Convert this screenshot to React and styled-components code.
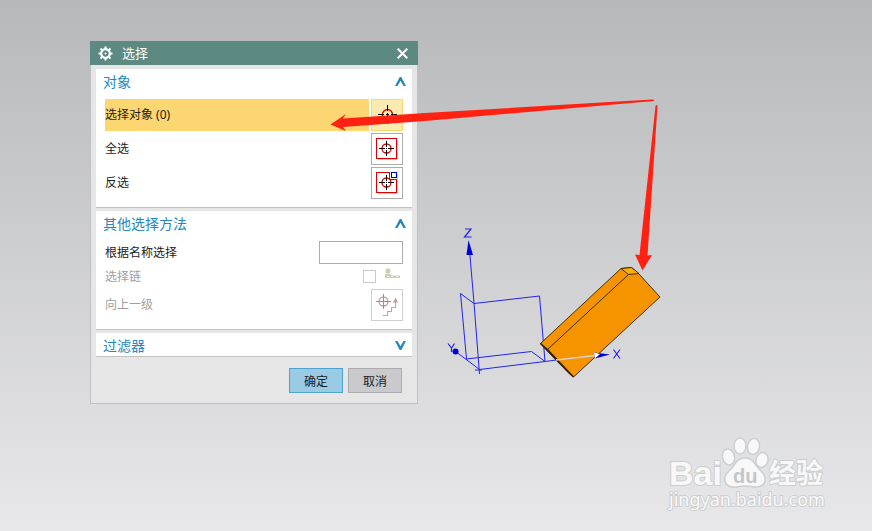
import React from "react";
import styled, { createGlobalStyle, css } from "styled-components";

const GlobalStyle = createGlobalStyle`
  *, *::before, *::after { box-sizing: border-box; }
  body {
    margin: 0;
    font-family: "Noto Sans", "Noto Sans CJK SC", sans-serif;
    font-size: 12px;
    color: #1c1c1c;
  }
`;

const Viewport = styled.main`
  position: relative;
  min-height: 100vh;
  padding: 41px 90px;
  overflow: hidden;
  background: linear-gradient(#b7b8b9, #e8e8ea);
`;

const Scene = styled.svg`
  position: absolute;
  top: 0;
  left: 0;
  pointer-events: none;
`;

const Watermark = styled.svg`
  position: absolute;
  right: 42px;
  bottom: 16px;
  pointer-events: none;
`;

const Dialog = styled.section`
  width: 100%;
  max-width: 328px;
`;

const TitleBar = styled.header`
  display: flex;
  align-items: center;
  gap: 9px;
  height: 24px;
  padding: 0 10px 0 8px;
  background: #5c8a82;
  color: #fff;
`;

const Title = styled.h1`
  flex: 1;
  margin: 0;
  font-size: 13px;
  font-weight: 400;
  line-height: 24px;
`;

const PlainButton = styled.button`
  display: flex;
  padding: 0;
  border: 0;
  background: none;
  color: inherit;
`;

const Body = styled.form`
  display: flex;
  flex-direction: column;
  gap: 3px;
  padding: 4px 5px 10px;
  border: 1px solid #c0c0c2;
  border-top: 0;
  background: #e6e6e6;
`;

const Group = styled.section`
  padding-bottom: ${(p) => (p.$open ? 8 : 0)}px;
  border-bottom: 1px solid #c3c3c3;
  background: #fff;
`;

const GroupHeader = styled.h2`
  display: flex;
  align-items: center;
  justify-content: space-between;
  height: 23px;
  margin: 0;
  padding: 2px 6px 0 7px;
  color: #2587bd;
  font-size: 14px;
  font-weight: 400;
  line-height: 26px;
`;

const Rows = styled.div`
  display: flex;
  flex-direction: column;
  gap: ${(p) => p.$gap}px;
  padding: 7px 9px 0;
`;

const Row = styled.div`
  display: flex;
  align-items: center;
  gap: 2px;
  color: ${(p) => (p.$disabled ? "#a0a0a0" : "inherit")};
`;

const RowLabel = styled.label`
  flex: 1;
  line-height: ${(p) => p.$height || 32}px;
  ${(p) => p.$selected && css`background: #fcd670;`}
`;

const ToolButton = styled.button`
  display: grid;
  place-items: center;
  width: 32px;
  height: 32px;
  padding: 0;
  border: 1px solid #acacac;
  background: #fff;
  ${(p) => p.$selected && css`border-color: #fcd670; background: #faebb0;`}
  &:disabled { border-color: #cfcfcf; }
`;

const NameInput = styled.input`
  width: 84px;
  height: 23px;
  padding: 0 4px;
  border: 1px solid #acacac;
  background: #fff;
  font: inherit;
`;

const CheckBox = styled.input`
  appearance: none;
  width: 13px;
  height: 13px;
  margin: 0 5px 0 0;
  border: 1px solid #cacaca;
  background: #fff;
`;

const Footer = styled.footer`
  display: flex;
  justify-content: flex-end;
  gap: 5px;
  padding: 8px 10px 0;
`;

const ActionButton = styled.button`
  width: 54px;
  height: 25px;
  padding: 0;
  border: 1px solid ${(p) => (p.$primary ? "#4ca3d0" : "#acacae")};
  background: ${(p) => (p.$primary ? "#9acbe5" : "#c9c9ce")};
  color: inherit;
  font: inherit;
`;

function GearIcon() {
  return (
    <svg width="15" height="15" viewBox="-7.5 -7.5 15 15" aria-hidden="true">
      {[0, 45, 90, 135, 180, 225, 270, 315].map((a) => (
        <rect key={a} x="-1" y="-7" width="2" height="3" fill="#fff" transform={`rotate(${a})`} />
      ))}
      <circle r="4.3" fill="none" stroke="#fff" strokeWidth="2.2" />
      <circle r="1" fill="#fff" />
    </svg>
  );
}

function CloseIcon() {
  return (
    <svg width="11" height="11" viewBox="0 0 11 11" aria-hidden="true">
      <path d="M.7.7 10.3 10.3M10.3.7.7 10.3" stroke="#fff" strokeWidth="2" />
    </svg>
  );
}

function Chevron({ down }) {
  return (
    <svg width="11" height="9" viewBox="0 0 11 9" aria-hidden="true">
      <path
        d={down ? "M0 0H2.5L5.5 5.2 8.5 0H11L6.3 9H4.7Z" : "M0 9H2.5L5.5 3.8 8.5 9H11L6.3 0H4.7Z"}
        fill="#2587bd"
      />
    </svg>
  );
}

function PickIcon({ kind }) {
  if (kind === "single") {
    return (
      <svg width="20" height="20" viewBox="0 0 20 20" shapeRendering="crispEdges" aria-hidden="true">
        <circle cx="10.5" cy="9.5" r="5" fill="none" stroke="#d00" strokeWidth="1.3" shapeRendering="auto" />
        <path d="M1 9.5H7M9 9.5H12M14 9.5H20M10.5 0V6M10.5 8V11M10.5 13V19" stroke="#000" />
      </svg>
    );
  }
  const inverted = kind === "invert";
  return (
    <svg width="22" height="22" viewBox="0 0 22 22" shapeRendering="crispEdges" aria-hidden="true">
      <path d="M2 21.5H21.5V2" fill="none" stroke="#c8c8c8" />
      <path
        d={inverted ? "M13.5 .5H.5V20.5H20.5V7.5H13.5Z" : "M.5 .5H20.5V20.5H.5Z"}
        fill="#fff"
        stroke="#d80000"
      />
      <circle cx="10.5" cy="10.5" r="4.5" fill="none" stroke="#d40000" strokeWidth="1.3" shapeRendering="auto" />
      <path d="M3 10.5H9M12 10.5H18M10.5 3V9M10.5 12V18M10 10.5H11" stroke="#000" />
      {inverted && <rect x="15.5" y=".5" width="5" height="5" fill="#fff" stroke="#0000c0" />}
    </svg>
  );
}

function ChainIcon() {
  return (
    <svg width="20" height="17" viewBox="0 0 20 17" aria-hidden="true">
      <path d="M5 0V6M2 3H8M3 1 7 5M7 1 3 5" stroke="#c9ccb0" strokeWidth="1.2" />
      <path d="M2 6H7L9 7.500H17V10H2Z" fill="#cdd0b6" />
      <path d="M4 8.500H6M8 8.500H10M13 8.500H15" stroke="#f5f5ec" />
    </svg>
  );
}

function LevelUpIcon() {
  return (
    <svg width="24" height="24" viewBox="0 0 24 24" aria-hidden="true">
      <g fill="none" stroke="#c9a3a3">
        <circle cx="8.5" cy="8.5" r="4.5" strokeWidth="1.4" />
        <path d="M8 22.5H12.5V18.5H16.5V14.5H20.5V8" shapeRendering="crispEdges" />
      </g>
      <path d="M1 8.5H16M8.5 1V16" stroke="#929292" shapeRendering="crispEdges" />
      <path d="M20.5 4.5 23 9.5H18Z" fill="#c39b9b" />
    </svg>
  );
}

function Drawing() {
  return (
    <Scene width="872" height="531" viewBox="0 0 872 531" aria-hidden="true">
      <g fill="none" stroke="#2222f0">
        <path d="M469.5 250 474 303 479.5 374M475 370H482" />
        <path d="M474 303.5 539.5 296 545 361.5 479.5 369.5 455 351" />
        <path d="M474 303.5 460.5 293.5 466.5 359 531.5 351.5 545 361.5" />
      </g>
      <path d="M468.5 240 473 255H466.5Z" fill="#0000d8" />
      <circle cx="455.5" cy="351.5" r="3" fill="#0000d8" />
      <path d="M540.5 343.5 621 268.5 631.5 267.5 638.5 273.5 660 297 573.5 377Z" fill="#f69400" stroke="#44300e" />
      <path d="M621 268.5 631.5 267.5 639 273.5 628.5 274.5Z" fill="#ffae00" stroke="#3c2c0c" />
      <path d="M547.5 349.5 628.5 274.5" stroke="#3c2c0c" />
      <path d="M540.5 343.5 547.5 349.5 573.5 377 569 373Z" fill="#5d3b0b" stroke="#332207" strokeWidth="1.4" />
      <path d="M545 361.5 556 360" stroke="#2222f0" />
      <path d="M556 360 596 355.5" stroke="#dcd0cb" strokeWidth="1.3" />
      <path d="M594 352.5 610 354.5 595 358.5Z" fill="#0000d8" />
      <path d="M594 352.5 600 354 595 358.5Z" fill="#fff" />
      <g fill="none" stroke="#2222f0" strokeWidth="1.2">
        <path d="M465 229H471L464.5 237H471.5" />
        <path d="M448 343.5 451.5 348 454.5 343.5M451.5 348V352" />
        <path d="M613.5 349.5 620 358.5M620 349.5 613.5 358.5" />
      </g>
      <g fill="#ff2111">
        <path d="M330.5 124.5 346 114 343 118.5 425 113 652 99.5Q655 99.5 654 101L425 121 343 127 346 131Z" />
        <path d="M655.5 106Q656.5 104 657.5 106L647.5 255.5 652 255 642.5 270.5 635 254.5 639.5 255Z" />
      </g>
    </Scene>
  );
}

const MarkText = styled.text`
  font-family: ${(p) => (p.$latin ? `"${p.$latin}", ` : "")}"Noto Sans CJK SC", sans-serif;
  font-weight: ${(p) => p.$weight};
  font-size: ${(p) => p.$size}px;
  paint-order: stroke;
`;

function BaiduMark() {
  return (
    <Watermark width="164" height="84" viewBox="666 431 164 84" role="img" aria-label="Baidu">
      <g fill="#f8f8f8" stroke="#ccced0" strokeWidth="2" strokeLinejoin="round">
        <MarkText $latin="Liberation Sans" $weight={700} $size={34} x="669" y="485">Bai</MarkText>
        <g strokeWidth="1.5">
          <ellipse cx="728.5" cy="457" rx="6" ry="8" transform="rotate(-15 728.5 457)" />
          <ellipse cx="740" cy="446" rx="6" ry="8" />
          <ellipse cx="753.5" cy="446.5" rx="6" ry="8" transform="rotate(10 753.5 446.5)" />
          <ellipse cx="762" cy="460" rx="6" ry="7.5" transform="rotate(15 762 460)" />
          <path d="M745 458C754 458 755 466 761 471 769 479 765 488 754 487Q745 485 736 487C725 488 721 479 729 471 735 466 736 458 745 458Z" />
        </g>
        <MarkText $weight={700} $size={27} x="769" y="483">经验</MarkText>
        <MarkText $latin="Noto Sans" $weight={400} $size={18} x="669" y="506">jingyan.baidu.com</MarkText>
      </g>
      <MarkText $latin="Liberation Sans" $weight={700} $size={20} x="733" y="483" fill="#c4c6c8">du</MarkText>
    </Watermark>
  );
}

function PickRow({ id, label, kind, selected }) {
  return (
    <Row>
      <RowLabel htmlFor={id} $selected={selected}>{label}</RowLabel>
      <ToolButton id={id} type="button" $selected={selected}>
        <PickIcon kind={kind} />
      </ToolButton>
    </Row>
  );
}

export default function App() {
  return (
    <>
      <GlobalStyle />
      <Viewport>
        <Dialog role="dialog" aria-labelledby="dialog-title">
          <TitleBar>
            <GearIcon />
            <Title id="dialog-title">选择</Title>
            <PlainButton type="button" aria-label="关闭"><CloseIcon /></PlainButton>
          </TitleBar>
          <Body onSubmit={(e) => e.preventDefault()}>
            <Group $open>
              <GroupHeader>
                对象
                <PlainButton type="button" aria-label="对象"><Chevron /></PlainButton>
              </GroupHeader>
              <Rows $gap={2}>
                <PickRow id="pick" label="选择对象 (0)" kind="single" selected />
                <PickRow id="all" label="全选" kind="all" />
                <PickRow id="invert" label="反选" kind="invert" />
              </Rows>
            </Group>
            <Group $open>
              <GroupHeader>
                其他选择方法
                <PlainButton type="button" aria-label="其他选择方法"><Chevron /></PlainButton>
              </GroupHeader>
              <Rows $gap={4}>
                <Row>
                  <RowLabel htmlFor="by-name" $height={23}>根据名称选择</RowLabel>
                  <NameInput id="by-name" type="text" />
                </Row>
                <Row $disabled>
                  <RowLabel htmlFor="chain" $height={17}>选择链</RowLabel>
                  <CheckBox id="chain" type="checkbox" disabled />
                  <ChainIcon />
                </Row>
                <Row $disabled>
                  <RowLabel htmlFor="level-up">向上一级</RowLabel>
                  <ToolButton id="level-up" type="button" disabled><LevelUpIcon /></ToolButton>
                </Row>
              </Rows>
            </Group>
            <Group>
              <GroupHeader>
                过滤器
                <PlainButton type="button" aria-label="过滤器"><Chevron down /></PlainButton>
              </GroupHeader>
            </Group>
            <Footer>
              <ActionButton type="submit" $primary>确定</ActionButton>
              <ActionButton type="button">取消</ActionButton>
            </Footer>
          </Body>
        </Dialog>
        <Drawing />
        <BaiduMark />
      </Viewport>
    </>
  );
}
